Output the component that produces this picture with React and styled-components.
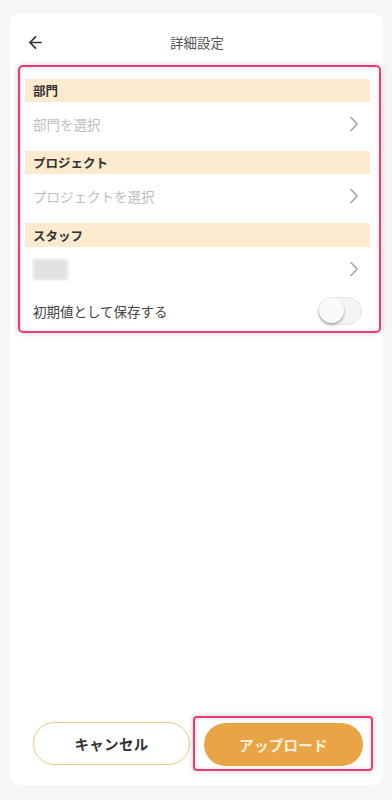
import React from "react";
import styled, { createGlobalStyle } from "styled-components";
import { ArrowLeft } from "lucide-react";

const Global = createGlobalStyle`
  html, body { margin: 0; padding: 0; background: #f6f5f8; }
  body { font-family: "Noto Sans CJK JP", "Noto Sans", sans-serif; }
  * { box-sizing: border-box; }
`;

const Card = styled.div`
  margin: 13px 9px 15px 10px;
  height: 772px;
  background: #fff;
  border-radius: 10px;
  display: flex;
  flex-direction: column;
`;

const Header = styled.div`
  height: 26px;
  margin-top: 16px;
  margin-bottom: 10px;
  position: relative;
  display: flex;
  align-items: center;
  justify-content: center;
`;

const BackButton = styled.div`
  position: absolute;
  left: 16px;
  top: 4px;
  display: flex;
  color: #333;
`;

const Title = styled.div`
  font-size: 13.5px;
  color: #555;
  margin-left: 1px;
`;

const Highlight = styled.div`
  border: 2px solid #f2386c;
  border-radius: 5px;
  box-shadow: 0 0 6px rgba(0, 0, 0, 0.18), inset 0 0 5px rgba(0, 0, 0, 0.1);
  margin: 0 2px 0 8px;
  padding: 12px 9px 0 5px;
`;

const Band = styled.div`
  height: ${(p) => p.$h || 23}px;
  background: #fdebcf;
  padding-left: 8px;
  display: flex;
  align-items: center;
  font-size: 12.5px;
  font-weight: 700;
  color: #333;
`;

const Row = styled.div`
  height: 44px;
  margin-bottom: ${(p) => (p.$last ? 0 : 5)}px;
  display: flex;
  align-items: center;
  justify-content: space-between;
  padding: 0 11px 0 8px;
`;

const Placeholder = styled.span`
  font-size: 13.5px;
  color: #bdbdbd;
`;

const Blurred = styled.div`
  width: 35px;
  height: 21px;
  background: #e2e2e2;
  filter: blur(1.5px);
`;

const ToggleRow = styled.div`
  height: 40px;
  display: flex;
  align-items: center;
  justify-content: space-between;
  padding: 0 8px 0 8px;
`;

const ToggleLabel = styled.span`
  font-size: 13.5px;
  color: #444;
`;

const Track = styled.div`
  width: 44px;
  height: 28px;
  border-radius: 14px;
  background: #f4f4f4;
  border: 1px solid #e6e6e6;
  position: relative;
`;

const Knob = styled.div`
  position: absolute;
  left: 0;
  top: 0;
  width: 25px;
  height: 25px;
  border-radius: 50%;
  background: #fafafa;
  box-shadow: 0 2px 3px rgba(0, 0, 0, 0.3);
`;

const Spacer = styled.div`
  flex: 1;
`;

const Footer = styled.div`
  display: flex;
  align-items: center;
  padding: 0 10px 14px 23px;
`;

const Button = styled.div`
  height: 43px;
  border-radius: 22px;
  display: flex;
  align-items: center;
  justify-content: center;
  font-size: 14.5px;
  font-weight: 700;
  letter-spacing: 0.3px;
`;

const CancelButton = styled(Button)`
  width: 157px;
  border: 1.5px solid #ebc77f;
  color: #333;
  background: #fff;
  margin-right: 3px;
`;

const UploadMark = styled.div`
  border: 2px solid #f2386c;
  border-radius: 4px;
  padding: 5px 8px 3px 9px;
  box-shadow: 0 0 6px rgba(0, 0, 0, 0.18), inset 0 0 5px rgba(0, 0, 0, 0.12);
`;

const UploadButton = styled(Button)`
  width: 159px;
  background: #e9a545;
  color: #fdf1dc;
`;

const Chevron = () => (
  <svg width="10" height="16" viewBox="0 0 10 16" fill="none">
    <path d="M2 1.5 L8.2 8 L2 14.5" stroke="#a3a3a3" strokeWidth="1.5" strokeLinecap="round" strokeLinejoin="round" />
  </svg>
);

export default function App() {
  return (
    <>
      <Global />
      <Card>
        <Header>
          <BackButton>
            <ArrowLeft size={19} strokeWidth={2.2} />
          </BackButton>
          <Title>詳細設定</Title>
        </Header>
        <Highlight>
          <Band>部門</Band>
          <Row>
            <Placeholder>部門を選択</Placeholder>
            <Chevron />
          </Row>
          <Band>プロジェクト</Band>
          <Row>
            <Placeholder>プロジェクトを選択</Placeholder>
            <Chevron />
          </Row>
          <Band $h={24}>スタッフ</Band>
          <Row $last>
            <Blurred />
            <Chevron />
          </Row>
          <ToggleRow>
            <ToggleLabel>初期値として保存する</ToggleLabel>
            <Track>
              <Knob />
            </Track>
          </ToggleRow>
        </Highlight>
        <Spacer />
        <Footer>
          <CancelButton>キャンセル</CancelButton>
          <UploadMark>
            <UploadButton>アップロード</UploadButton>
          </UploadMark>
        </Footer>
      </Card>
    </>
  );
}
